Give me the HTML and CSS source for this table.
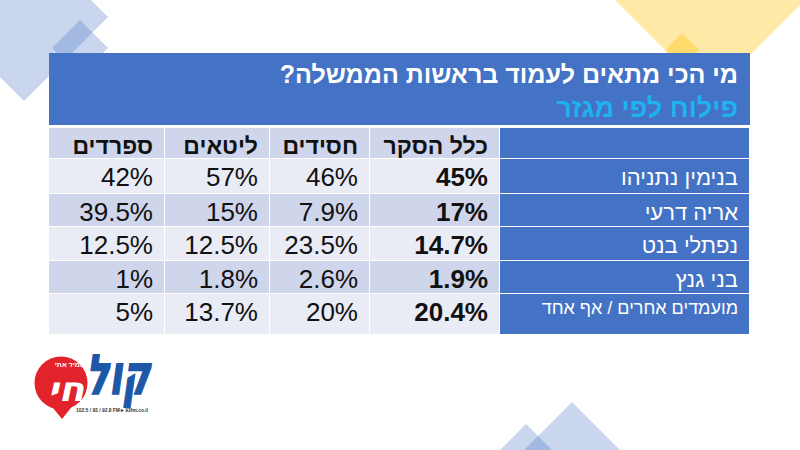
FILE: index.html
```html
<!DOCTYPE html>
<html lang="he" dir="rtl">
<head>
<meta charset="utf-8">
<title>מי הכי מתאים לעמוד בראשות הממשלה?</title>
<link rel="stylesheet" href="styles.css">
</head>
<body>
<svg class="deco" viewBox="0 0 800 450" width="800" height="450" aria-hidden="true">
  <polygon class="d-blue" points="24,-67 108,17 24,101 -60,17"/>
  <polygon class="d-blue" points="80,20 108,48 80,76 52,48"/>
  <polygon class="d-yellow" points="710,-205 860,-55 710,95 560,-55"/>
  <polygon class="d-yellow" points="682,33 699,50 682,67 665,50"/>
  <polygon class="d-blue" points="572,402 622,452 572,502 522,452"/>
  <polygon class="d-blue" points="526,424 552,450 526,476 500,450"/>
</svg>

<main class="slide">
  <header class="titlebox">
    <h1 class="title">מי הכי מתאים לעמוד בראשות הממשלה?</h1>
    <p class="subtitle">פילוח לפי מגזר</p>
  </header>

  <table class="poll">
    <colgroup>
      <col class="c-name"><col class="c-all"><col class="c-has"><col class="c-lit"><col class="c-sef">
    </colgroup>
    <thead>
      <tr class="row-head">
        <th class="name"></th><th>כלל הסקר</th><th>חסידים</th><th>ליטאים</th><th>ספרדים</th>
      </tr>
    </thead>
    <tbody>
      <tr class="row-light r1">
        <th class="name">בנימין נתניהו</th><td class="all">45%</td><td>46%</td><td>57%</td><td>42%</td>
      </tr>
      <tr class="row-dark r2">
        <th class="name">אריה דרעי</th><td class="all">17%</td><td>7.9%</td><td>15%</td><td>39.5%</td>
      </tr>
      <tr class="row-light r3">
        <th class="name">נפתלי בנט</th><td class="all">14.7%</td><td>23.5%</td><td>12.5%</td><td>12.5%</td>
      </tr>
      <tr class="row-dark r4">
        <th class="name">בני גנץ</th><td class="all">1.9%</td><td>2.6%</td><td>1.8%</td><td>1%</td>
      </tr>
      <tr class="row-light r5">
        <th class="name small">מועמדים אחרים / אף אחד</th><td class="all">20.4%</td><td>20%</td><td>13.7%</td><td>5%</td>
      </tr>
    </tbody>
  </table>
</main>

<footer class="brand">
  <svg class="logo" viewBox="24 332 150 95" width="150" height="95" role="img" aria-label="קול חי">
    <path class="l-red" d="M44 396 L62 418 L74 403 Z"/>
    <circle class="l-red" cx="61" cy="382" r="26.5"/>
    <text class="l-kol" transform="translate(118 393) skewX(-8) scale(1 1.45)">קול</text>
    <text class="l-hai" transform="translate(66 400) skewX(-12) scale(1.1 1)">חי</text>
    <text class="l-tag" x="71" y="366">תמיד אתי!</text>
    <text class="l-fm" transform="translate(112 411) scale(0.82 1)">102.5 / 93 / 92.8 FM ▸ 93fm.co.il</text>
  </svg>
</footer>
</body>
</html>
```

FILE: styles.css
```css
html, body {
  margin: 0;
  padding: 0;
}

body {
  width: 800px;
  height: 450px;
  overflow: hidden;
  position: relative;
  background: #ffffff;
  font-family: "Liberation Sans", Arial, sans-serif;
  color: #111111;
}

/* decorative background shapes */
.deco {
  position: absolute;
  left: 0;
  top: 0;
  z-index: 0;
}

.d-blue {
  fill: #4472c4;
  fill-opacity: 0.29;
}

.d-yellow {
  fill: #ffc000;
  fill-opacity: 0.35;
}

/* slide content */
.slide {
  position: relative;
  z-index: 1;
  width: 701px;
  margin: 53px 50px 0 0;
}

.titlebox {
  box-sizing: border-box;
  height: 72px;
  background: #4472c4;
  padding: 3px 12px 0 12px;
  text-align: right;
  overflow: hidden;
}

.title {
  margin: 0;
  font-size: 25px;
  line-height: 36px;
  font-weight: bold;
  color: #ffffff;
}

.subtitle {
  margin: 0;
  font-size: 27px;
  line-height: 33px;
  font-weight: bold;
  color: #1fb1f0;
}

.poll {
  margin-top: 2px;
  width: 701px;
  table-layout: fixed;
  border-collapse: collapse;
}

.c-name { width: 250px; }
.c-all  { width: 130px; }
.c-has  { width: 100px; }
.c-lit  { width: 105px; }
.c-sef  { width: 116px; }

.poll th,
.poll td {
  box-sizing: border-box;
  border: 1px solid #ffffff;
  padding: 5px 11px 0 11px;
  vertical-align: top;
  text-align: right;
  font-size: 26px;
  line-height: 26px;
  font-weight: normal;
  white-space: nowrap;
  overflow: hidden;
}

.row-head th {
  font-size: 23px;
  line-height: 22px;
  font-weight: bold;
  padding-top: 7px;
  background: #cfd5ea;
}

.row-light td { background: #e9ebf5; }
.row-dark td  { background: #cfd5ea; }

.poll .name {
  background: #4472c4;
  color: #ffffff;
  font-size: 22px;
  font-weight: normal;
  padding-top: 6px;
}

.poll .name.small {
  font-size: 18px;
  line-height: 22px;
  padding-top: 3px;
}

.poll .all {
  font-weight: bold;
}

.row-head { height: 31px; }
.r1 { height: 35px; }
.r2 { height: 33px; }
.r3 { height: 34px; }
.r4 { height: 33px; }
.r5 { height: 41px; }

/* logo */
.brand {
  position: relative;
  z-index: 1;
  display: flex;
  direction: ltr;
  margin-top: -2px;
  padding-left: 24px;
}

.logo {
  display: block;
  direction: ltr;
}

.l-red {
  fill: #e3232b;
}

.l-tag {
  font-family: "Liberation Sans", Arial, sans-serif;
  font-size: 7px;
  font-weight: bold;
  fill: #ffffff;
  text-anchor: middle;
}

.l-hai {
  font-family: "DejaVu Sans", "Liberation Sans", sans-serif;
  font-size: 34px;
  font-weight: bold;
  fill: #ffffff;
  text-anchor: middle;
}

.l-kol {
  font-family: "DejaVu Sans", "Liberation Sans", sans-serif;
  font-size: 38px;
  font-weight: bold;
  fill: #1d58a8;
  stroke: #1d58a8;
  stroke-width: 1.2px;
  text-anchor: middle;
}

.l-fm {
  font-family: "Liberation Sans", Arial, sans-serif;
  font-size: 6px;
  font-weight: bold;
  fill: #333333;
  text-anchor: middle;
}
```
